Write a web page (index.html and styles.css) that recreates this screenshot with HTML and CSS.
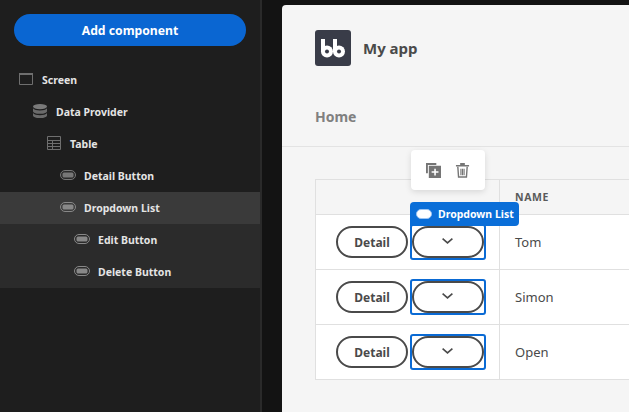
FILE: index.html
```html
<!DOCTYPE html>
<html lang="en">
<head>
<meta charset="utf-8">
<title>My app</title>
<link rel="stylesheet" href="styles.css">
</head>
<body>
<div class="app">
  <aside class="sidebar">
    <div class="add-wrap"><button class="add">Add component</button></div>
    <ul class="tree">
      <li class="node l0">
        <svg class="ic" viewBox="0 0 14 14"><path fill="none" stroke="#6f6f6f" d="M.5 1.500h13v11H.5z"/><path fill="#6f6f6f" d="M0 1h14v2H0z"/></svg>
        <span>Screen</span></li>
      <li class="node l1">
        <svg class="ic" viewBox="0 0 14 14"><ellipse cx="7" cy="2.600" rx="7" ry="2.600" fill="#7a7a7a"/><path fill="#6a6a6a" d="M0 4.200c1 1.600 4 2.200 7 2.200s6-.6 7-2.200v3c0 1.500-3 2.600-7 2.600S0 8.700 0 7.200z"/><path fill="#6a6a6a" d="M0 9c1 1.600 4 2.200 7 2.200S13 10.600 14 9v2.400c0 1.500-3 2.600-7 2.600s-7-1.100-7-2.600z"/></svg>
        <span>Data Provider</span></li>
      <li class="node l2">
        <svg class="ic" viewBox="0 0 14 14"><path fill="none" stroke="#6f6f6f" d="M.5.5h13v13H.5zM.5 4.500h13M.5 7.500h13M.5 10.500h13M5.500 4.500v9"/></svg>
        <span>Table</span></li>
      <li class="node l3">
        <svg class="ic pill" viewBox="0 0 16 10"><rect x=".5" y=".5" width="15" height="9" rx="4.500" fill="#2a2a2a" stroke="#777"/><rect x="2.500" y="2.500" width="11" height="5" rx="1.500" fill="#777"/></svg>
        <span>Detail Button</span></li>
      <li class="node l3 selected">
        <svg class="ic pill" viewBox="0 0 16 10"><rect x=".5" y=".5" width="15" height="9" rx="4.500" fill="#3a3a3a" stroke="#888"/><rect x="2.500" y="2.500" width="11" height="5" rx="1.500" fill="#888"/></svg>
        <span>Dropdown List</span></li>
      <li class="node l4 child">
        <svg class="ic pill" viewBox="0 0 16 10"><rect x=".5" y=".5" width="15" height="9" rx="4.500" fill="#2a2a2a" stroke="#888"/><rect x="2.500" y="2.500" width="11" height="5" rx="1.500" fill="#888"/></svg>
        <span>Edit Button</span></li>
      <li class="node l4 child">
        <svg class="ic pill" viewBox="0 0 16 10"><rect x=".5" y=".5" width="15" height="9" rx="4.500" fill="#2a2a2a" stroke="#888"/><rect x="2.500" y="2.500" width="11" height="5" rx="1.500" fill="#888"/></svg>
        <span>Delete Button</span></li>
    </ul>
  </aside>
  <main class="stage">
    <div class="preview">
      <header class="head">
        <div class="brand">
          <svg class="logo" viewBox="0 0 36 36"><rect width="36" height="36" rx="3" fill="#393c48"/><g fill="#fff"><rect x="6" y="9" width="4" height="13"/><circle cx="12" cy="21.500" r="6"/><rect x="18" y="9" width="4" height="13"/><circle cx="24" cy="21.500" r="6"/></g><circle cx="12" cy="21.500" r="2" fill="#393c48"/><circle cx="24" cy="21.500" r="2" fill="#393c48"/></svg>
          <span class="title">My app</span>
        </div>
        <nav class="nav">Home</nav>
      </header>
      <section class="content">
        <div class="toolbar">
          <svg class="tool" viewBox="0 0 16 16"><path fill="#757575" d="M0 0h11v2H2v9H0z"/><path fill="#757575" d="M3 3h13v13H3z"/><path fill="#fff" d="M8.800 6h1.700v2.800h2.800v1.600h-2.800v2.800H8.800v-2.800H6V8.800h2.800z"/></svg>
          <svg class="tool" viewBox="0 0 14 16"><path fill="none" stroke="#757575" stroke-width="1.500" d="M2 4l.8 11h8.400L12 4"/><path fill="#757575" d="M0 2.200h14v1.600H0zM4.500 0h5v2h-5zM4.700 6h1.200v7H4.700zM6.400 6h1.200v7H6.400zM8.100 6h1.200v7H8.100z"/></svg>
        </div>
        <table class="grid">
          <thead>
            <tr><th class="actions"></th><th>NAME</th></tr>
          </thead>
          <tbody>
            <tr>
              <td class="actions"><div class="btns">
                <button class="pill-btn">Detail</button>
                <div class="sel">
                  <div class="tag">
                    <svg class="tag-ic" viewBox="0 0 16 10"><rect x=".5" y=".5" width="15" height="9" rx="4.500" fill="#fff" stroke="#9cc4f2"/></svg>
                    <span>Dropdown List</span>
                  </div>
                  <button class="pill-btn drop"><svg class="chev" viewBox="0 0 11 6"><path fill="none" stroke="#4a4a4a" stroke-width="1.600" d="M.6.6l4.900 4.300L10.400.6"/></svg></button>
                </div>
              </div></td>
              <td>Tom</td>
            </tr>
            <tr>
              <td class="actions"><div class="btns">
                <button class="pill-btn">Detail</button>
                <div class="sel"><button class="pill-btn drop"><svg class="chev" viewBox="0 0 11 6"><path fill="none" stroke="#4a4a4a" stroke-width="1.600" d="M.6.6l4.900 4.300L10.400.6"/></svg></button></div>
              </div></td>
              <td>Simon</td>
            </tr>
            <tr>
              <td class="actions"><div class="btns">
                <button class="pill-btn">Detail</button>
                <div class="sel"><button class="pill-btn drop"><svg class="chev" viewBox="0 0 11 6"><path fill="none" stroke="#4a4a4a" stroke-width="1.600" d="M.6.6l4.900 4.300L10.400.6"/></svg></button></div>
              </div></td>
              <td>Open</td>
            </tr>
          </tbody>
        </table>
      </section>
    </div>
  </main>
</div>
</body>
</html>
```
FILE: styles.css
```css
* { box-sizing: border-box; }
html, body { margin: 0; height: 100%; overflow: hidden; }
body { font-family: "Noto Sans", "Open Sans", sans-serif; background: #131313; }
.app { display: flex; width: 629px; height: 412px; overflow: hidden; }

.sidebar { flex: 0 0 262px; background: #1e1e1e; border-right: 2px solid #2a2a2a; }
.add-wrap { padding: 14px 14px 0; }
.add {
  display: block; width: 232px; height: 32px; border: 0; border-radius: 16px;
  background: #0a66d2; color: #fff; font: 700 12.200px "Noto Sans", sans-serif;
}
.tree { list-style: none; margin: 18px 0 0; padding: 0; }
.node {
  display: flex; align-items: center; height: 32px;
  color: #e4e4e4; font-size: 10.500px; font-weight: 700;
}
.ic { flex: none; width: 14px; height: 14px; margin-right: 9px; position: relative; top: -1px; }
.pill { width: 16px; height: 10px; margin-right: 8px; }
.l0 { padding-left: 19px; }
.l1 { padding-left: 33px; }
.l2 { padding-left: 47px; }
.l3 { padding-left: 60px; }
.l4 { padding-left: 74px; }
.selected { background: #3a3a3a; }
.child { background: #2b2b2b; }

.stage { flex: 1; padding: 5px 0 0 20px; min-width: 0; }
.preview {
  height: 100%; background: #f5f5f5; border-radius: 4px 0 0 0;
  width: 347px; overflow: hidden;
}
.head { height: 142px; padding: 25px 0 0 33px; border-bottom: 1px solid #e3e3e3; }
.brand { display: flex; align-items: center; gap: 12px; }
.logo { width: 36px; height: 36px; flex: none; }
.title { font-size: 15px; font-weight: 700; color: #4a4a4a; }
.nav { margin-top: 41px; font-size: 14px; font-weight: 700; color: #808080; }

.content { position: relative; padding: 32px 0 0 33px; }
.toolbar {
  position: absolute; left: 129px; top: 3px; width: 74px; height: 40px;
  display: flex; align-items: center; justify-content: center; gap: 14px;
  background: #fff; border-radius: 4px; box-shadow: 0 2px 6px rgba(0,0,0,.12);
}
.tool { width: 15px; height: 15px; }
.grid {
  border-collapse: collapse; background: #fff; width: 400px; table-layout: fixed;
  font-size: 13px; color: #4a4a4a;
}
.grid th, .grid td { border: 1px solid #e0e0e0; padding: 0 0 0 15px; text-align: left; }
.grid th { height: 35px; background: #f5f5f5; font-size: 10.500px; font-weight: 700; letter-spacing: .6px; color: #5a5a5a; }
.grid td { height: 55px; }
.grid .actions { width: 184px; padding: 0; }
.btns { display: flex; align-items: center; gap: 2px; padding-left: 20px; }
.pill-btn {
  width: 72px; height: 32px; border: 2px solid #4a4a4a; border-radius: 16px;
  background: #fff; color: #4a4a4a; font: 700 12px "Noto Sans", sans-serif; padding: 0;
}
.sel {
  position: relative; width: 76px; height: 36px; padding: 0;
  border: 2px solid #0a6ad4; border-radius: 3px;
  display: flex; align-items: center; justify-content: center;
}
.drop { display: flex; align-items: center; justify-content: center; padding: 0 2px 2px 0; }
.chev { width: 11px; height: 6px; }
.tag {
  position: absolute; left: -2px; top: -24px; width: 109px; height: 24px;
  display: flex; align-items: center; gap: 6px; padding-left: 6px;
  background: #0a6ed8; color: #fff; border-radius: 4px 4px 4px 0;
  font-size: 10.500px; font-weight: 700;
}
.tag-ic { width: 16px; height: 10px; flex: none; }
```
